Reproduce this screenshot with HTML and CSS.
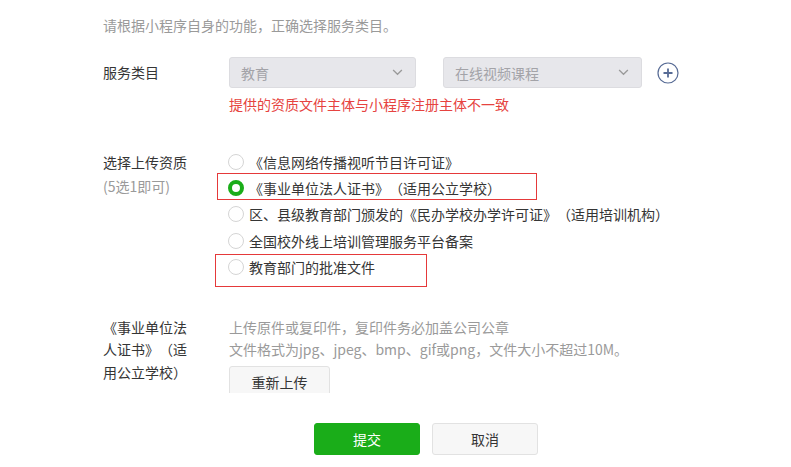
FILE: index.html
```html
<!DOCTYPE html>
<html lang="zh-CN">
<head>
<meta charset="utf-8">
<link rel="stylesheet" href="styles.css">
</head>
<body>
<div class="page">
  <p class="intro">请根据小程序自身的功能，正确选择服务类目。</p>

  <div class="row service">
    <div class="label">服务类目</div>
    <div class="field">
      <div class="selects">
        <div class="select s1"><span>教育</span><svg class="chev" viewBox="0 0 12 8" width="11" height="7"><path d="M1 1.2 6 6 11 1.2" fill="none" stroke="#9a9a9a" stroke-width="1.5"/></svg></div>
        <div class="select s2"><span>在线视频课程</span><svg class="chev" viewBox="0 0 12 8" width="11" height="7"><path d="M1 1.2 6 6 11 1.2" fill="none" stroke="#9a9a9a" stroke-width="1.5"/></svg></div>
        <svg class="plus" viewBox="0 0 22 22" width="22" height="22"><circle cx="11" cy="11" r="10" fill="none" stroke="#576b95" stroke-width="1.2"/><path d="M6.5 11h9M11 6.5v9" stroke="#576b95" stroke-width="1.8"/></svg>
      </div>
      <p class="error">提供的资质文件主体与小程序注册主体不一致</p>
    </div>
  </div>

  <div class="row quals">
    <div class="label">选择上传资质<br><span class="sub">(5选1即可)</span></div>
    <div class="options">
      <div class="opt"><i class="radio"></i>《信息网络传播视听节目许可证》</div>
      <div class="opt"><i class="radio on"></i>《事业单位法人证书》（适用公立学校）</div>
      <div class="opt"><i class="radio"></i>区、县级教育部门颁发的《民办学校办学许可证》（适用培训机构）</div>
      <div class="opt"><i class="radio"></i>全国校外线上培训管理服务平台备案</div>
      <div class="opt"><i class="radio"></i>教育部门的批准文件</div>
      <div class="mark mark1"></div>
      <div class="mark mark2"></div>
    </div>
  </div>

  <div class="row upload">
    <div class="label narrow">《事业单位法人证书》（适用公立学校）</div>
    <div class="field">
      <p class="hint">上传原件或复印件，复印件务必加盖公司公章</p>
      <p class="hint">文件格式为jpg、jpeg、bmp、gif或png，文件大小不超过10M。</p>
      <div class="clip"><button class="btn plain reup">重新上传</button></div>
    </div>
  </div>

  <div class="actions">
    <button class="btn primary">提交</button>
    <button class="btn plain">取消</button>
  </div>
</div>
</body>
</html>
```

FILE: styles.css
```css
* { box-sizing: border-box; }
html, body { margin: 0; padding: 0; background: #fff; }
body {
  font-family: "Microsoft YaHei", "Noto Sans CJK SC", "Noto Sans", sans-serif;
  font-size: 14px;
  color: #353535;
  width: 791px;
  height: 467px;
  overflow: hidden;
  text-spacing-trim: space-all;
}
p { margin: 0; }
.page { padding-left: 103px; }
.intro { color: #9a9a9a; line-height: 20px; padding-top: 15px; }

.row { display: flex; }
.label { width: 126px; flex: none; }

.service { margin-top: 22px; }
.service .label { line-height: 31px; }
.selects { display: flex; align-items: center; }
.select {
  height: 31px;
  background: #e7e7eb;
  border: 1px solid #dcdce0;
  border-radius: 3px;
  display: flex;
  align-items: center;
  justify-content: space-between;
  padding: 0 12px 0 11px;
  color: #a3a3a8;
}
.s1 { width: 187px; margin-right: 27px; }
.s2 { width: 199px; margin-right: 15px; }
.chev { display: block; }
.plus { display: block; }
.error { color: #e64340; line-height: 20px; margin-top: 6px; }

.quals { margin-top: 35px; }
.quals .label { line-height: 24px; padding-top: 1px; }
.sub { color: #9a9a9a; }
.options { position: relative; }
.opt { display: flex; align-items: center; height: 26.2px; margin-left: -1px; }
.radio {
  width: 16px; height: 16px;
  border-radius: 50%;
  border: 1px solid #d5d5d5;
  background: #fff;
  margin-right: 5px;
  flex: none;
}
.radio.on { border: 4px solid #1aad19; }
.mark { position: absolute; border: 1px solid #e5393a; }
.mark1 { left: -12px; top: 24px; width: 320px; height: 27px; }
.mark2 { left: -14px; top: 105px; width: 212px; height: 33px; }

.upload { margin-top: 36px; }
.upload .label.narrow { width: 92px; margin-right: 34px; line-height: 22.5px; }
.hint { color: #9a9a9a; line-height: 22.5px; }
.clip { height: 27px; overflow: hidden; margin-top: 5px; }

.btn {
  font-family: inherit;
  font-size: 14px;
  height: 32px;
  border-radius: 3px;
  cursor: pointer;
  padding: 0;
}
.plain { background: #f7f7f7; border: 1px solid #e2e2e2; color: #353535; }
.reup { width: 101px; }
.primary { background: #1aad19; border: 1px solid #1aad19; color: #fff; }
.actions { display: flex; gap: 12px; padding-left: 211px; margin-top: 30px; }
.actions .btn { width: 106px; }
```
